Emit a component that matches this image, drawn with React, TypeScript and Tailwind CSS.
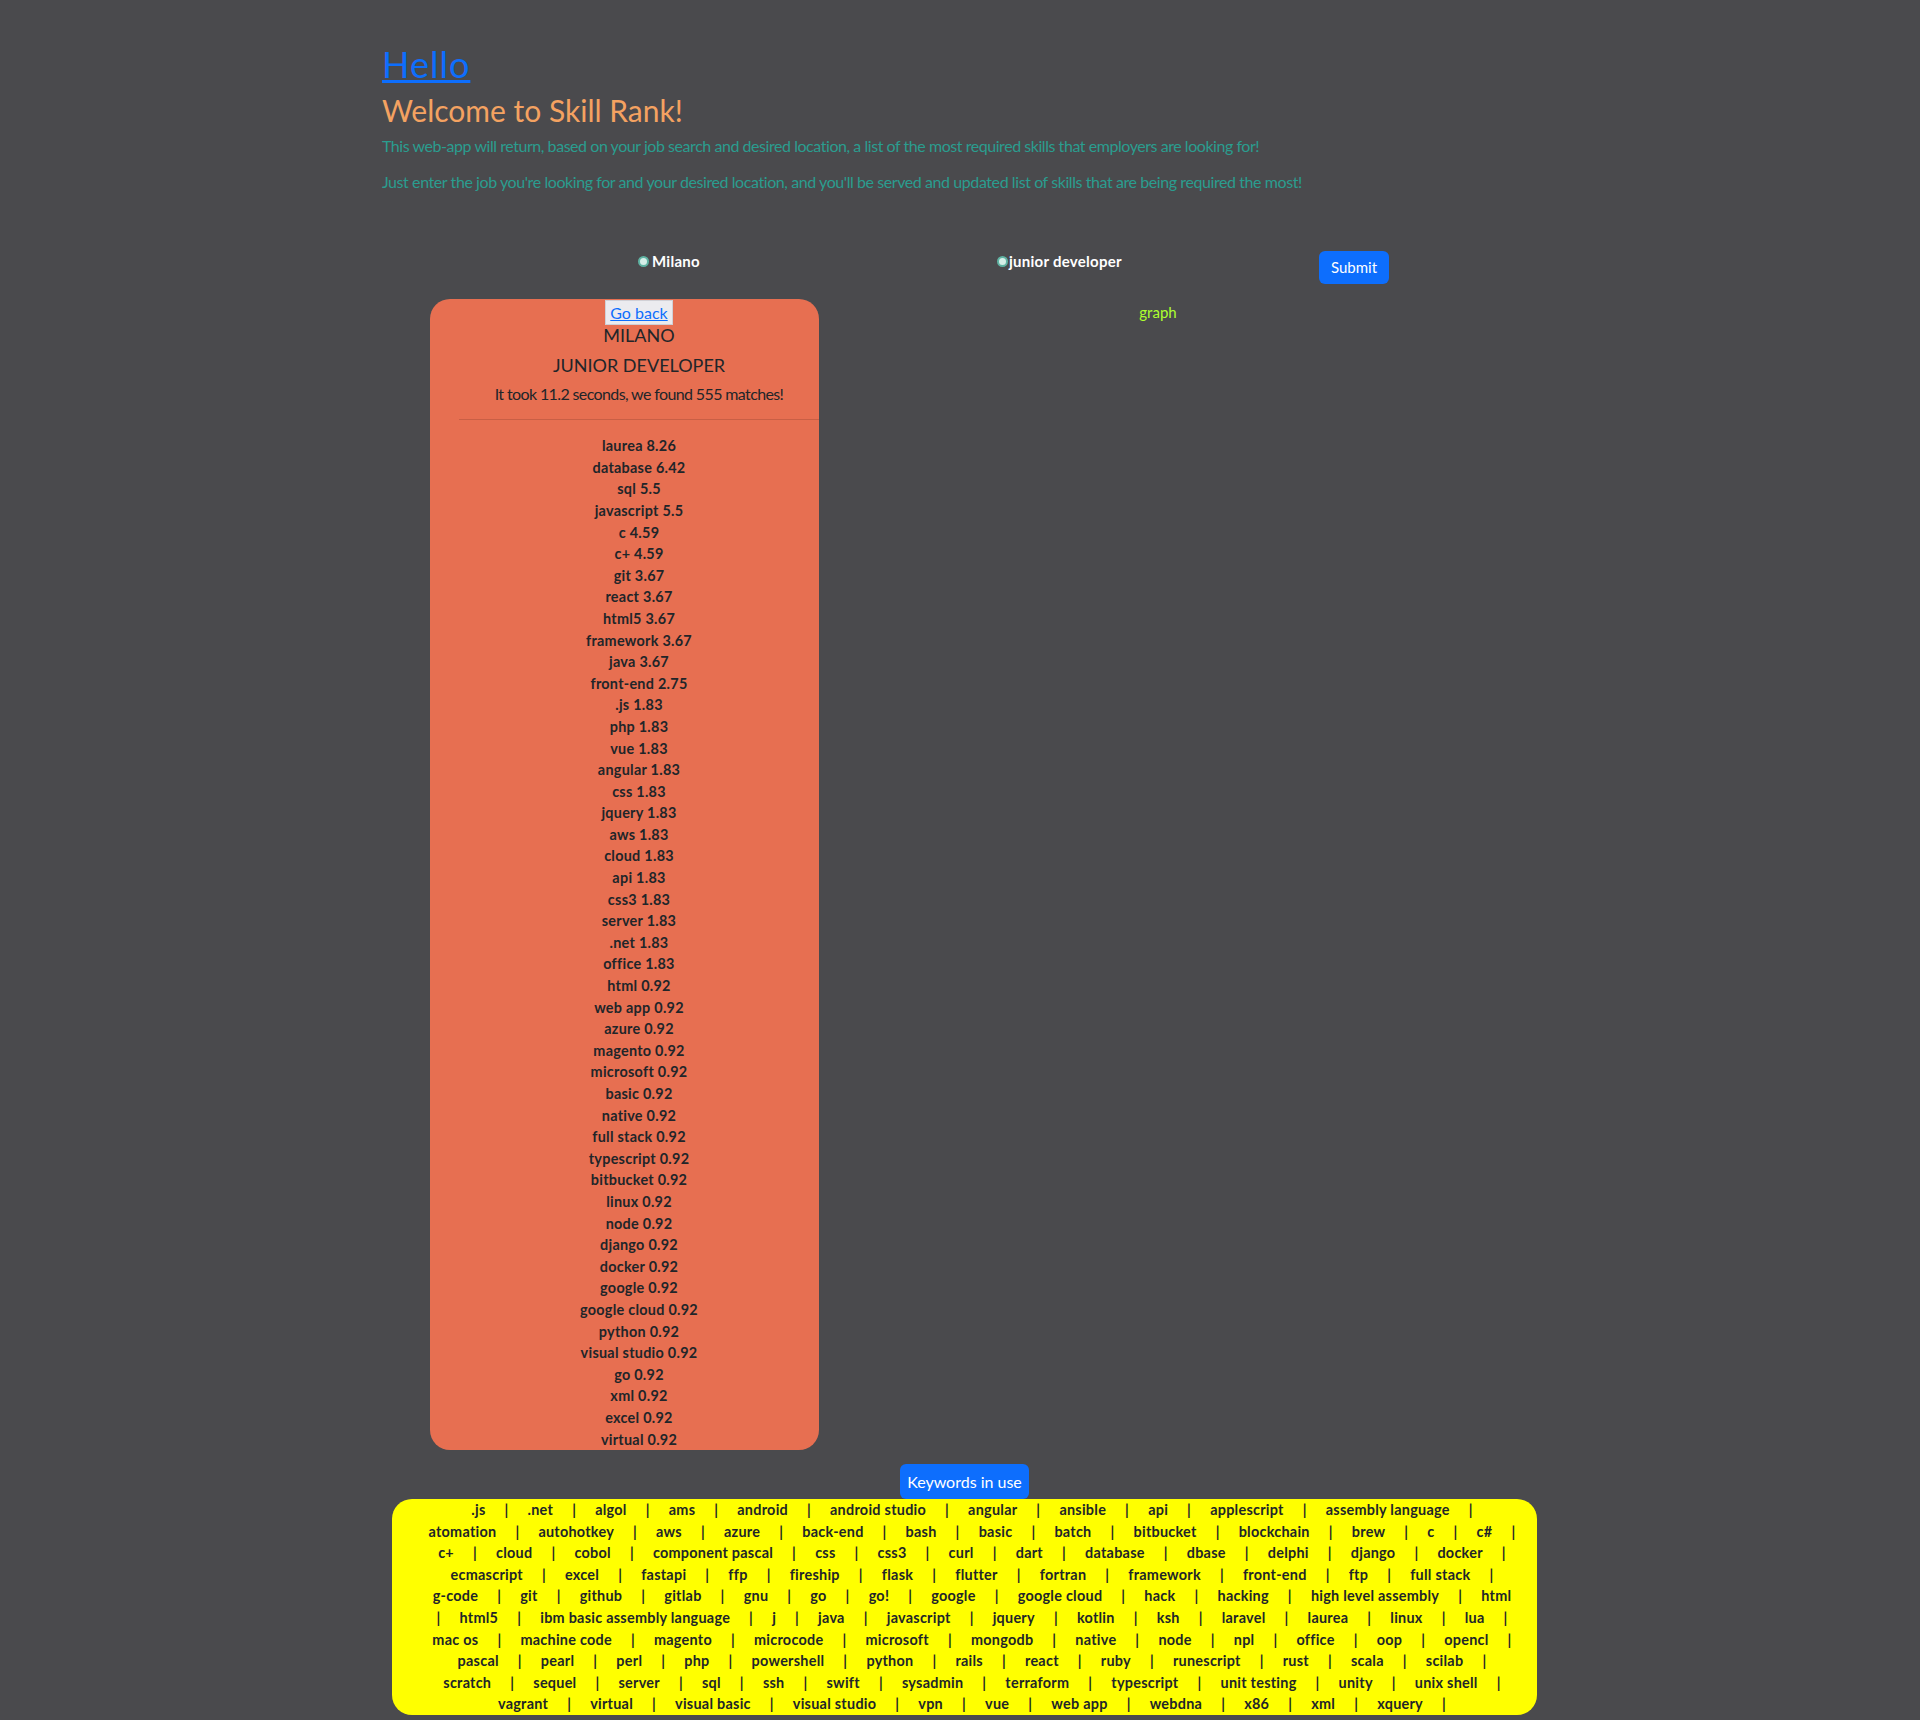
const skills: [string, string][] = [
  ["laurea", "8.26"], ["database", "6.42"], ["sql", "5.5"], ["javascript", "5.5"], ["c", "4.59"], ["c+", "4.59"],
  ["git", "3.67"], ["react", "3.67"], ["html5", "3.67"], ["framework", "3.67"], ["java", "3.67"], ["front-end", "2.75"],
  [".js", "1.83"], ["php", "1.83"], ["vue", "1.83"], ["angular", "1.83"], ["css", "1.83"], ["jquery", "1.83"],
  ["aws", "1.83"], ["cloud", "1.83"], ["api", "1.83"], ["css3", "1.83"], ["server", "1.83"], [".net", "1.83"],
  ["office", "1.83"], ["html", "0.92"], ["web app", "0.92"], ["azure", "0.92"], ["magento", "0.92"], ["microsoft", "0.92"],
  ["basic", "0.92"], ["native", "0.92"], ["full stack", "0.92"], ["typescript", "0.92"], ["bitbucket", "0.92"], ["linux", "0.92"],
  ["node", "0.92"], ["django", "0.92"], ["docker", "0.92"], ["google", "0.92"], ["google cloud", "0.92"], ["python", "0.92"],
  ["visual studio", "0.92"], ["go", "0.92"], ["xml", "0.92"], ["excel", "0.92"], ["virtual", "0.92"],
];

const keywordLines: { lead?: boolean; items: string[]; trail: boolean }[] = [
  { items: [".js", ".net", "algol", "ams", "android", "android studio", "angular", "ansible", "api", "applescript", "assembly language"], trail: true },
  { items: ["atomation", "autohotkey", "aws", "azure", "back-end", "bash", "basic", "batch", "bitbucket", "blockchain", "brew", "c", "c#"], trail: true },
  { items: ["c+", "cloud", "cobol", "component pascal", "css", "css3", "curl", "dart", "database", "dbase", "delphi", "django", "docker"], trail: true },
  { items: ["ecmascript", "excel", "fastapi", "ffp", "fireship", "flask", "flutter", "fortran", "framework", "front-end", "ftp", "full stack"], trail: true },
  { items: ["g-code", "git", "github", "gitlab", "gnu", "go", "go!", "google", "google cloud", "hack", "hacking", "high level assembly", "html"], trail: false },
  { lead: true, items: ["html5", "ibm basic assembly language", "j", "java", "javascript", "jquery", "kotlin", "ksh", "laravel", "laurea", "linux", "lua"], trail: true },
  { items: ["mac os", "machine code", "magento", "microcode", "microsoft", "mongodb", "native", "node", "npl", "office", "oop", "opencl"], trail: true },
  { items: ["pascal", "pearl", "perl", "php", "powershell", "python", "rails", "react", "ruby", "runescript", "rust", "scala", "scilab"], trail: true },
  { items: ["scratch", "sequel", "server", "sql", "ssh", "swift", "sysadmin", "terraform", "typescript", "unit testing", "unity", "unix shell"], trail: true },
  { items: ["vagrant", "virtual", "visual basic", "visual studio", "vpn", "vue", "web app", "webdna", "x86", "xml", "xquery"], trail: true },
];

function Radio() {
  return <span className="inline-block w-[11px] h-[11px] rounded-full border-2 border-[#5fb3a3] bg-[#d6efe9] shrink-0" />;
}

export default function App() {
  return (
    <div className="min-h-[1720px] bg-[#4a4a4d] font-['Lato',sans-serif] text-[#212529]">
      <div className="w-[1156px] mx-auto pt-[43px] pb-[20px]">
        <h1 className="text-[36px] leading-[43px] m-0 tracking-[1px]">
          <a href="#" className="text-[#0d6efd] underline">Hello</a>
        </h1>
        <h2 className="mt-[6px] text-[30px] leading-[36px] text-[#f4a261]">Welcome to Skill Rank!</h2>
        <p className="mt-[6px] text-[16px] leading-[24px] text-[#2a9d8f] tracking-[-0.45px]">
          This web-app will return, based on your job search and desired location, a list of the most required skills that employers are looking for!
        </p>
        <p className="mt-[12px] text-[16px] leading-[24px] text-[#2a9d8f] tracking-[-0.42px]">
          Just enter the job you're looking for and your desired location, and you'll be served and updated list of skills that are being required the most!
        </p>

        <div className="mt-[57px] flex items-start h-[33px]">
          <label className="mt-[1px] ml-[256px] flex items-center gap-[3px] text-[15px] leading-[18px] font-bold text-white tracking-[0.27px]">
            <Radio />
            <span>Milano</span>
          </label>
          <label className="mt-[1px] ml-[297px] flex items-center gap-[1px] text-[15px] leading-[18px] font-bold text-white tracking-[0.27px]">
            <Radio />
            <span>junior developer</span>
          </label>
          <button className="ml-auto mr-[149px] w-[70px] h-[33px] rounded-[6px] bg-[#0d6efd] text-white text-[15px]">Submit</button>
        </div>

        <div className="mt-[15px] flex items-start">
          <div className="ml-[48px] w-[389px] rounded-[20px] bg-[#e76f51] pl-[29px] pt-[1px]">
            <div className="flex flex-col items-center">
              <button className="h-[25px] px-[4px] bg-[#ebebef] border border-[#d0d0d6] text-[16px] leading-[20px] text-[#0d6efd] underline">Go back</button>
              <div className="text-[18px] leading-[21.6px]">MILANO</div>
              <div className="mt-[8px] text-[18px] leading-[21.6px]">JUNIOR DEVELOPER</div>
              <div className="mt-[6px] text-[16px] leading-[24px] tracking-[-0.62px]">It took 11.2 seconds, we found 555 matches!</div>
            </div>
            <div className="mt-[13px] h-px bg-[#c95f45]" />
            <ul className="mt-[15px] text-center text-[14.4px] leading-[21.6px] font-bold tracking-[0.27px]">
              {skills.map(([k, v]) => (
                <li key={k}>{k} {v}</li>
              ))}
            </ul>
          </div>
          <div className="flex-1 text-center pr-[41px] pt-[1px] text-[15px] leading-[24px] text-[#adff2f]">graph</div>
        </div>

        <div className="mt-[14px] ml-[10px] w-[1145px] flex flex-col items-center">
          <button className="w-[129px] h-[35px] rounded-[6px] bg-[#0d6efd] text-white text-[16px]">Keywords in use</button>
          <div className="w-full rounded-[20px] bg-[#ffff00] pl-[15px] text-[14.4px] leading-[21.6px] font-bold text-[#212529] tracking-[0.27px]">
            {keywordLines.map((line, i) => (
              <div key={i} className="text-center whitespace-nowrap">
                {line.lead && <span className="mr-[19px]">|</span>}
                {line.items.map((kw, j) => {
                  const last = j === line.items.length - 1;
                  return (
                    <span key={j}>
                      <span>{kw}</span>
                      {!last && <span className="mx-[19px]">|</span>}
                      {last && line.trail && <span className="ml-[19px]">|</span>}
                    </span>
                  );
                })}
              </div>
            ))}
          </div>
        </div>
      </div>
    </div>
  );
}
